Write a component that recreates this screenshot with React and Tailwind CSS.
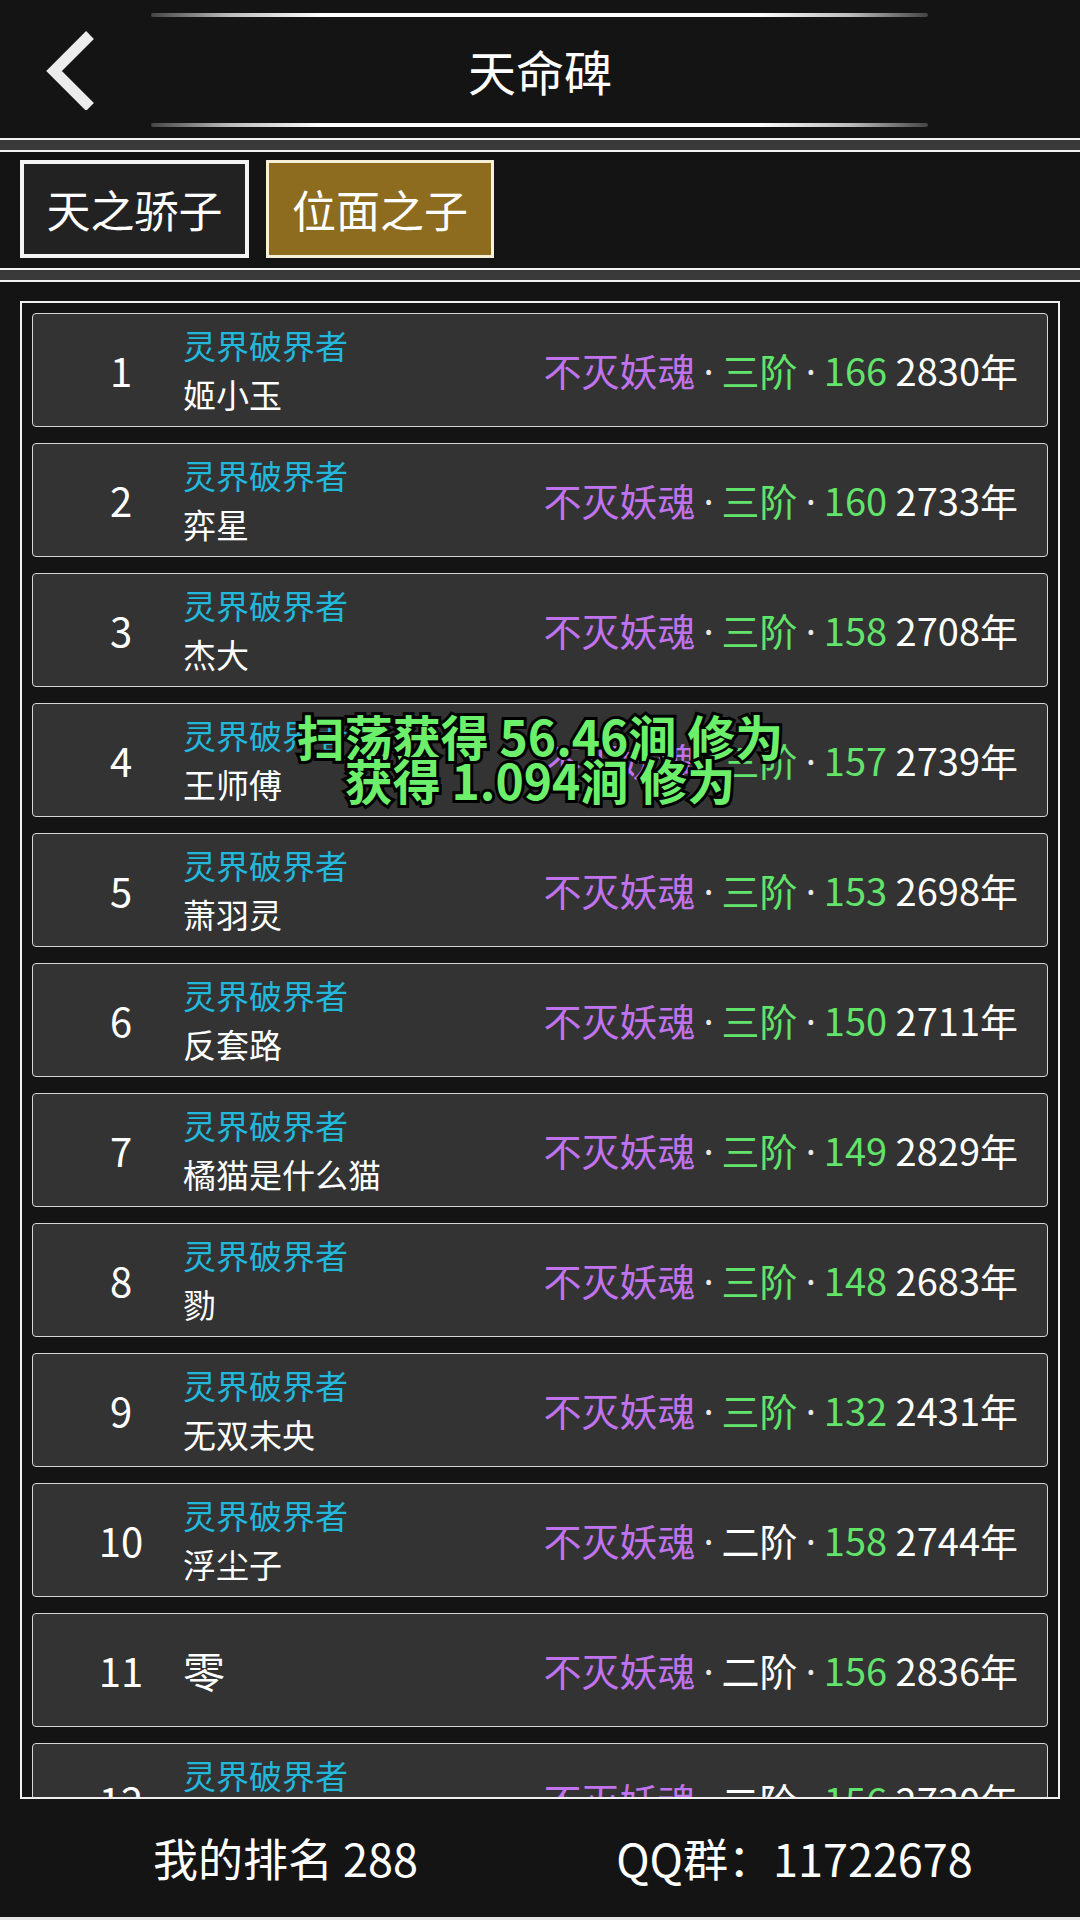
import React from 'react';

// 天命碑 ranking list
const rows = [
  { rank: 1, title: '灵界破界者', name: '姬小玉', tier: '三阶', lv: 166, years: 2830 },
  { rank: 2, title: '灵界破界者', name: '弈星', tier: '三阶', lv: 160, years: 2733 },
  { rank: 3, title: '灵界破界者', name: '杰大', tier: '三阶', lv: 158, years: 2708 },
  { rank: 4, title: '灵界破界者', name: '王师傅', tier: '三阶', lv: 157, years: 2739 },
  { rank: 5, title: '灵界破界者', name: '萧羽灵', tier: '三阶', lv: 153, years: 2698 },
  { rank: 6, title: '灵界破界者', name: '反套路', tier: '三阶', lv: 150, years: 2711 },
  { rank: 7, title: '灵界破界者', name: '橘猫是什么猫', tier: '三阶', lv: 149, years: 2829 },
  { rank: 8, title: '灵界破界者', name: '勠', tier: '三阶', lv: 148, years: 2683 },
  { rank: 9, title: '灵界破界者', name: '无双未央', tier: '三阶', lv: 132, years: 2431 },
  { rank: 10, title: '灵界破界者', name: '浮尘子', tier: '二阶', lv: 158, years: 2744 },
  { rank: 11, title: null, name: '零', tier: '二阶', lv: 156, years: 2836 },
  { rank: 12, title: '灵界破界者', name: '清风', tier: '二阶', lv: 156, years: 2730 },
];

function Separator() {
  return (
    <div className="flex flex-col">
      <div className="h-[2px] bg-[#f2f2f2]" />
      <div className="h-[10px] bg-[#3a3a3a]" />
      <div className="h-[2px] bg-[#f2f2f2]" />
    </div>
  );
}

function GlowLine() {
  return (
    <div className="ml-[151px] w-[777px] h-[4px] rounded-full bg-[linear-gradient(90deg,#444_0%,#bbb_10%,#fff_22%,#fff_78%,#bbb_90%,#444_100%)]" />
  );
}

function Dot() {
  return <span className="mx-[8px] text-[#e8e8e8] [font-family:'Noto_Sans',sans-serif]">·</span>;
}

function RankRow({ row }) {
  return (
    <div className="h-[114px] shrink-0 flex items-center bg-[#333333] border border-[#d6d6d6] rounded-[4px]">
      <div className="ml-[28px] w-[120px] text-center text-[40px] text-white leading-none">{row.rank}</div>
      <div className="ml-[2px] flex flex-col">
        {row.title ? (
          <>
            <span className="text-[33px] leading-[49px] text-[#22b8dc]">{row.title}</span>
            <span className="text-[33px] leading-[49px] text-white">{row.name}</span>
          </>
        ) : (
          <span className="text-[42px] leading-[50px] text-white">{row.name}</span>
        )}
      </div>
      <div className="ml-auto mr-[29px] text-[38px] leading-none whitespace-nowrap">
        <span className="text-[#c173ef]">不灭妖魂</span>
        <Dot />
        <span className={row.tier === '三阶' ? 'text-[#62e36c]' : 'text-white'}>{row.tier}</span>
        <Dot />
        <span className="text-[#62e36c]">{row.lv}</span>
        <span className="text-white"> {row.years}年</span>
      </div>
    </div>
  );
}

export default function App() {
  return (
    <div className="relative w-[1080px] h-[1920px] bg-[#141414] flex flex-col overflow-hidden [font-family:'Noto_Sans_CJK_SC','Noto_Sans',sans-serif] border-b-[3px] border-[#e8e8e8]">
      {/* Header */}
      <div className="relative h-[138px] shrink-0 flex flex-col justify-between pt-[13px] pb-[11px]">
        <GlowLine />
        <div className="absolute left-[40px] top-[30px]">
          <svg width="60" height="80" viewBox="0 0 60 80">
            <polyline points="50,5 14,41 50,77" fill="none" stroke="#ececec" strokeWidth="11" strokeLinejoin="miter" />
          </svg>
        </div>
        <div className="text-center text-[48px] leading-none text-white">天命碑</div>
        <GlowLine />
      </div>

      <Separator />

      {/* Tabs */}
      <div className="h-[116px] shrink-0 flex gap-[17px] pl-[20px] pt-[8px]">
        <div className="w-[229px] h-[98px] border-[4px] border-[#f4f4f4] bg-[#222222] flex items-center justify-center text-[44px] text-white">
          天之骄子
        </div>
        <div className="w-[228px] h-[98px] border-[3px] border-[#f6efd8] bg-[#8d6b1f] flex items-center justify-center text-[44px] text-white">
          位面之子
        </div>
      </div>

      <Separator />

      {/* Ranking list */}
      <div className="px-[20px] pt-[19px]">
        <div className="h-[1498px] border-2 border-[#f0f0f0] p-[10px] flex flex-col gap-[16px] overflow-hidden">
          {rows.map((row) => (
            <RankRow key={row.rank} row={row} />
          ))}
        </div>
      </div>

      {/* Bottom bar */}
      <div className="flex-1 grid grid-cols-2 items-center px-[31px] text-[45px] text-white text-center">
        <span>我的排名 288</span>
        <span>QQ群：11722678</span>
      </div>

      {/* Toast */}
      <div className="absolute left-0 right-0 top-[713px] text-center text-[48px] font-bold leading-[44px] text-[#6cf06c] [-webkit-text-stroke:6px_#000] [paint-order:stroke_fill]">
        <div>扫荡获得 56.46涧 修为</div>
        <div>获得 1.094涧 修为</div>
      </div>
    </div>
  );
}
